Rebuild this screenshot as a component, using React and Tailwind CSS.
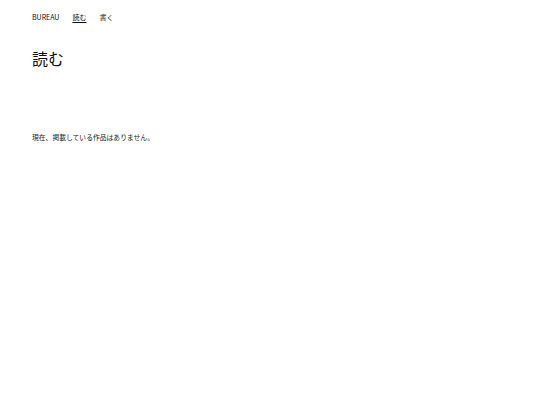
import React from 'react';

const font = { fontFamily: '"Noto Sans CJK JP", "Noto Sans", sans-serif' };

const App = () => {
  return (
    <div className="min-h-screen bg-white text-[#111] px-8" style={font}>
      {/* Header */}
      <nav className="flex items-center gap-[13px] pt-[12px] text-[7px] leading-[10px]">
        <span>BUREAU</span>
        <span className="underline underline-offset-2">読む</span>
        <span>書く</span>
      </nav>

      <h1 className="mt-[24px] text-[16px] leading-[24px] font-normal">読む</h1>

      <p className="mt-[62px] text-[6.8px] leading-[10px] text-[#222]">
        現在、掲載している作品はありません。
      </p>
    </div>
  );
};

export default App;
